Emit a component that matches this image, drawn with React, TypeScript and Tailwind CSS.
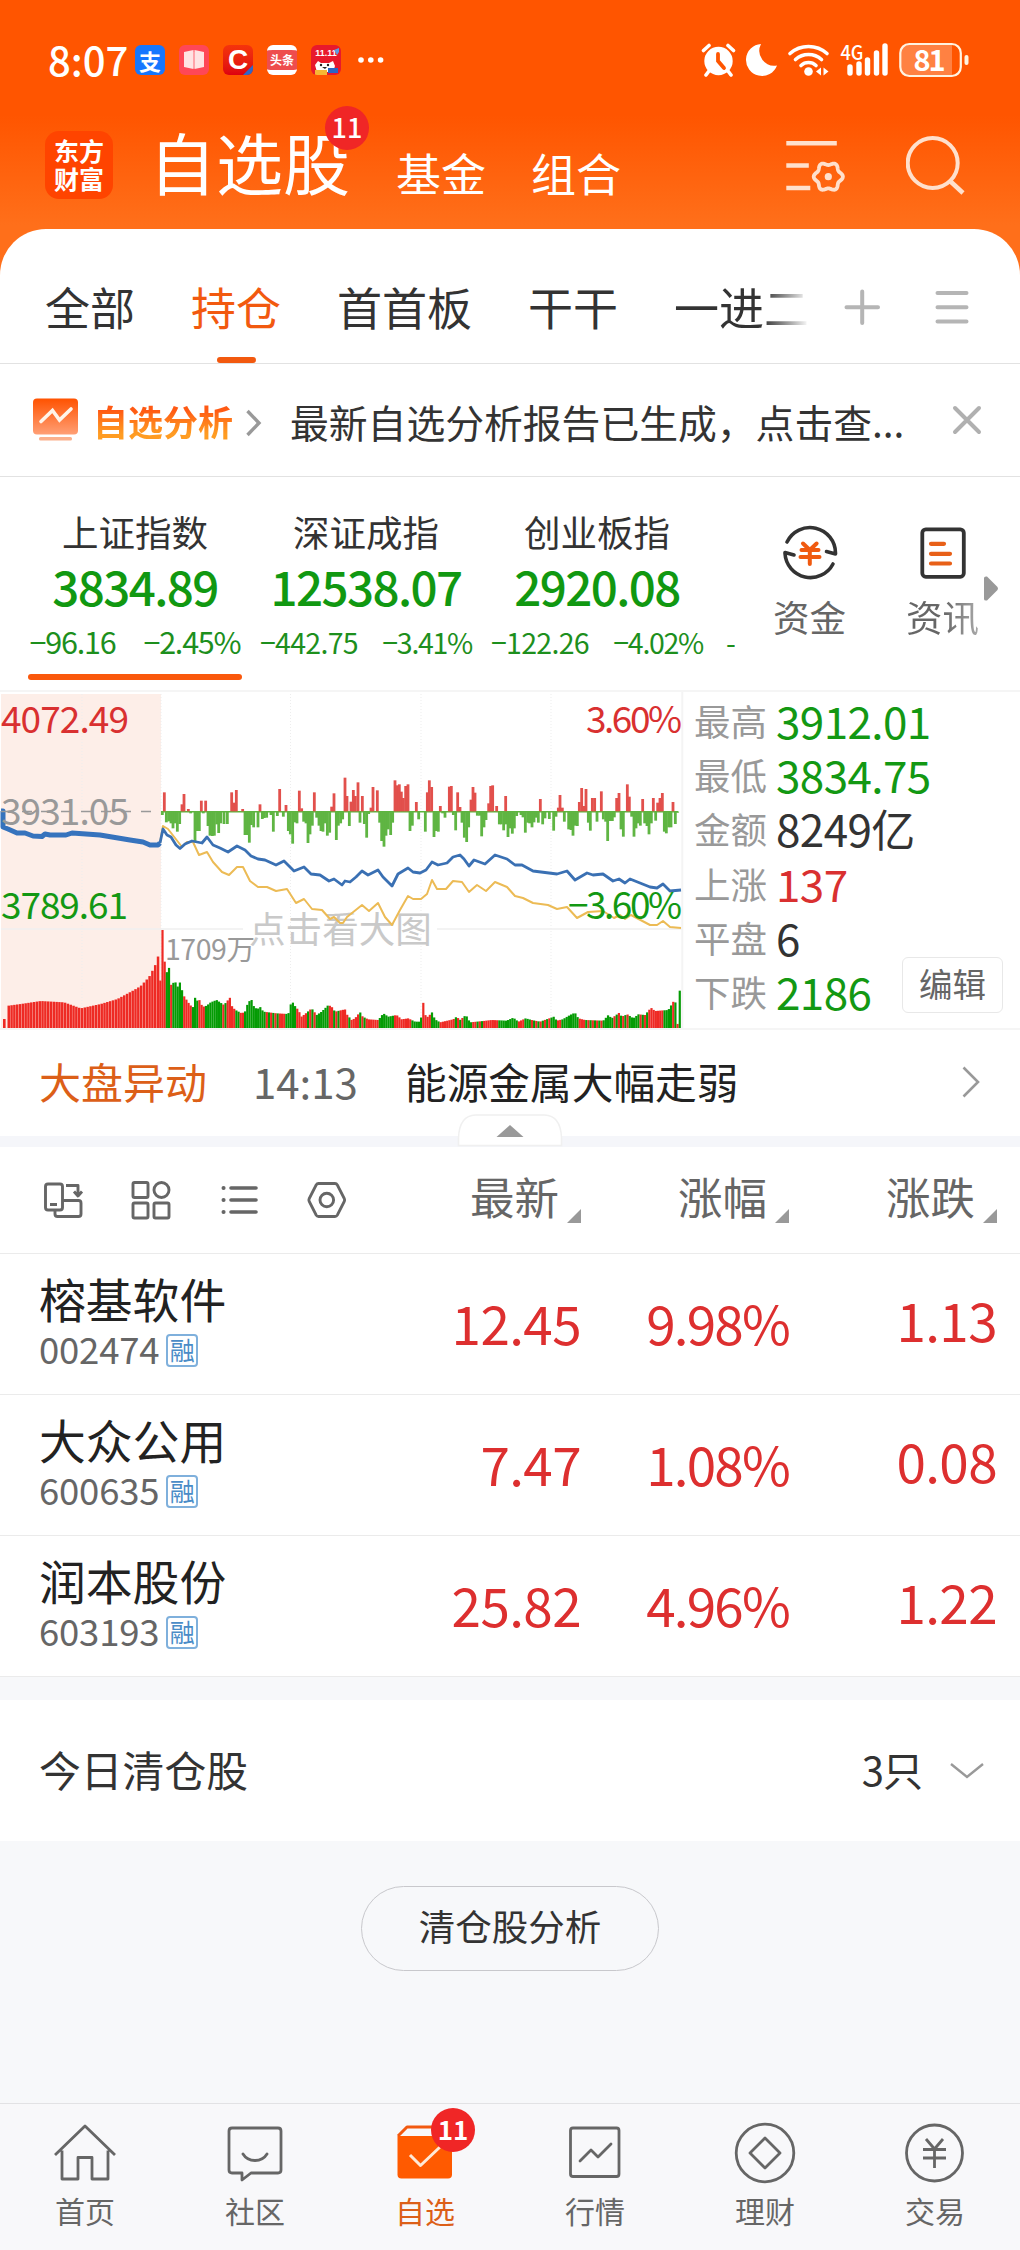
import type { ReactNode } from "react";

type Point = [number, number];

const tabs = ["全部", "持仓", "首首板", "干干", "一进二"];

const indices = [
  { name: "上证指数", value: "3834.89", diff: "−96.16", pct: "−2.45%", active: true },
  { name: "深证成指", value: "12538.07", diff: "−442.75", pct: "−3.41%", active: false },
  { name: "创业板指", value: "2920.08", diff: "−122.26", pct: "−4.02%", active: false },
];

const stats = [
  { label: "最高", value: "3912.01", color: "text-[#139813]" },
  { label: "最低", value: "3834.75", color: "text-[#139813]" },
  { label: "金额", value: "8249亿", color: "text-[#333333]" },
  { label: "上涨", value: "137", color: "text-[#d93030]" },
  { label: "平盘", value: "6", color: "text-[#333333]" },
  { label: "下跌", value: "2186", color: "text-[#139813]" },
];

const stocks = [
  { name: "榕基软件", code: "002474", price: "12.45", pct: "9.98%", change: "1.13" },
  { name: "大众公用", code: "600635", price: "7.47", pct: "1.08%", change: "0.08" },
  { name: "润本股份", code: "603193", price: "25.82", pct: "4.96%", change: "1.22" },
];

// chart data, x / y in thirds of a pixel, y counted from the top of the chart block
const upBars: Point[] = [
  [493, 307], [546, 343], [552, 312], [565, 357], [604, 332], [617, 332], [695, 307], [702, 338], [709, 300],
  [728, 357], [780, 343], [839, 297], [858, 345], [898, 302], [905, 355], [943, 307], [995, 350], [1002, 310],
  [1035, 263], [1041, 318], [1053, 335], [1060, 300], [1066, 318], [1074, 277], [1087, 318], [1113, 353],
  [1119, 291], [1132, 301], [1185, 271], [1191, 286], [1198, 283], [1204, 305], [1210, 324], [1217, 288],
  [1224, 283], [1249, 336], [1282, 307], [1288, 271], [1295, 291], [1321, 348], [1348, 290], [1354, 288],
  [1373, 307], [1380, 351], [1413, 329], [1419, 291], [1425, 308], [1466, 340], [1472, 288], [1478, 286],
  [1490, 348], [1517, 318], [1621, 327], [1675, 353], [1680, 315], [1687, 353], [1738, 336], [1745, 294],
  [1752, 348], [1758, 297], [1777, 324], [1784, 324], [1804, 304], [1850, 324], [1857, 309], [1882, 283],
  [1888, 320], [1928, 327], [1960, 324], [1973, 338], [1980, 324], [1987, 309], [2019, 336],
];

const downBars: Point[] = [
  [487, 375], [499, 397], [506, 394], [513, 400], [519, 415], [526, 400], [532, 425], [539, 402], [572, 370],
  [585, 457], [591, 423], [598, 423], [610, 370], [624, 408], [630, 437], [637, 438], [643, 437], [650, 403],
  [656, 429], [662, 400], [672, 402], [682, 402], [735, 435], [741, 435], [748, 458], [754, 405], [761, 412],
  [774, 412], [787, 387], [793, 384], [800, 383], [813, 375], [820, 425], [832, 378], [850, 380], [865, 423],
  [871, 433], [878, 461], [885, 397], [891, 400], [911, 395], [918, 400], [924, 459], [930, 433], [937, 407],
  [950, 383], [957, 407], [963, 423], [969, 425], [976, 400], [982, 437], [989, 428], [1009, 450], [1015, 407],
  [1022, 400], [1028, 388], [1048, 408], [1080, 398], [1093, 402], [1100, 443], [1106, 372], [1139, 398],
  [1145, 453], [1152, 470], [1158, 437], [1165, 418], [1172, 435], [1178, 398], [1230, 423], [1237, 407],
  [1256, 388], [1276, 425], [1302, 441], [1308, 423], [1315, 425], [1328, 370], [1335, 383], [1360, 375],
  [1367, 421], [1386, 398], [1393, 443], [1400, 456], [1406, 412], [1432, 377], [1439, 377], [1445, 439],
  [1452, 412], [1458, 390], [1498, 403], [1504, 403], [1511, 421], [1517, 403], [1524, 441], [1530, 415],
  [1537, 431], [1543, 415], [1550, 378], [1563, 375], [1569, 382], [1576, 428], [1583, 398], [1589, 400],
  [1596, 412], [1602, 397], [1609, 383], [1615, 398], [1628, 403], [1635, 385], [1648, 387], [1661, 422],
  [1668, 380], [1693, 395], [1706, 418], [1713, 420], [1719, 437], [1726, 407], [1732, 408], [1765, 398],
  [1771, 422], [1791, 395], [1810, 388], [1817, 395], [1823, 453], [1830, 393], [1837, 393], [1843, 382],
  [1863, 418], [1870, 440], [1895, 380], [1902, 440], [1908, 415], [1915, 400], [1921, 407], [1934, 400],
  [1941, 408], [1947, 433], [1954, 400], [1967, 392], [1993, 425], [1999, 430], [2006, 412], [2013, 412],
  [2026, 402], [2033, 368],
];

const auctionCurve: Point[] = [
  [23, 947], [60, 942], [120, 933], [190, 937], [240, 955], [300, 942], [350, 927], [400, 900], [420, 888],
  [445, 861], [460, 833], [468, 815], [475, 787],
];

const volumeCurve: Point[] = [
  [480, 902], [486, 720], [489, 720], [495, 833], [502, 850], [507, 833], [513, 885], [525, 874], [533, 890],
  [540, 877], [550, 915], [560, 930], [570, 945], [580, 952], [585, 923], [592, 932], [600, 930], [605, 945],
  [612, 950], [620, 947], [632, 937], [650, 930], [672, 945], [680, 935], [690, 923], [697, 952], [710, 962],
  [725, 970], [735, 965], [745, 935], [755, 930], [762, 950], [772, 958], [780, 950], [790, 965], [830, 970],
  [865, 972], [875, 932], [885, 948], [895, 960], [905, 980], [920, 968], [935, 955], [950, 975], [965, 965],
  [985, 945], [995, 950], [1005, 965], [1035, 958], [1042, 975], [1055, 990], [1065, 985], [1080, 966],
  [1088, 980], [1105, 988], [1135, 990], [1150, 970], [1165, 980], [1190, 975], [1205, 988], [1225, 985],
  [1245, 995], [1262, 995], [1269, 933], [1276, 975], [1285, 982], [1295, 965], [1305, 988], [1320, 997],
  [1360, 988], [1370, 980], [1380, 990], [1398, 975], [1410, 997], [1450, 993], [1475, 990], [1520, 992],
  [1540, 983], [1555, 995], [1577, 985], [1595, 990], [1620, 995], [1662, 980], [1670, 992], [1688, 988],
  [1710, 975], [1725, 968], [1735, 985], [1755, 990], [1810, 992], [1825, 975], [1835, 985], [1858, 968],
  [1865, 980], [1882, 973], [1900, 985], [1915, 973], [1935, 975], [1953, 953], [1965, 963], [2005, 960],
  [2020, 935], [2028, 938], [2033, 1005], [2037, 1005], [2039, 902],
];

// end of each colour run: r = up, g = down, m = alternating
const volumeRuns: [number, string][] = [
  [495, "r"], [512, "g"], [518, "m"], [550, "g"], [578, "r"], [592, "g"], [616, "r"], [668, "g"], [684, "m"],
  [708, "r"], [722, "g"], [735, "r"], [788, "g"], [835, "m"], [858, "r"], [890, "g"], [918, "r"], [930, "g"],
  [945, "m"], [986, "g"], [1000, "r"], [1024, "m"], [1045, "r"], [1050, "g"], [1075, "r"], [1102, "m"],
  [1135, "r"], [1180, "g"], [1235, "r"], [1265, "g"], [1295, "r"], [1320, "g"], [1360, "r"], [1400, "m"],
  [1418, "g"], [1430, "r"], [1455, "m"], [1495, "r"], [1553, "g"], [1570, "r"], [1595, "g"], [1660, "m"],
  [1670, "g"], [1685, "r"], [1735, "g"], [1750, "r"], [1810, "m"], [1840, "g"], [1885, "m"], [1910, "g"],
  [1945, "m"], [1992, "r"], [2015, "g"], [2023, "r"], [2030, "g"], [2036, "r"], [2050, "g"],
];

const preOpenLine =
  "1,811 3,811 3,827 8,829 17,833 25,833 33,836 42,836.5 45,834 50,835 66,835 72,833 100,835 130,840 143,842 150,845 158,845 160,843";
const indexLine =
  "160,843 163,829 167,835 171,837 176,845 180,848.5 185,844 192,841 202,843 207,837 213,845 220,848 228,852 237,846 245,850 251,856 258,859 265,860 276,865 284,861 294,871 304,867 311,874 320,875 329,881 334,879 342,885 345,881 350,882 356,877 362,871 368,875 378,870 383,877 392,886 398,874 408,868 413,872 420,873 426,870 432,862 438,865 447,863 453,857 460,855 464,859 469,866 474,860 485,864 495,855 507,859 515,865 522,865 533,871 557,874 567,871 575,880 587,873 593,875 603,874 613,881 619,879 625,883 630,879 650,887 657,888 663,884 670,891 681,890";
const leadLine =
  "160,843 163,826 168,829 175,838 182,847 187,842 193,842 199,855 207,852 213,862 222,872 229,875 237,867 243,867 250,881 258,887 267,887 276,891 287,889 296,903 304,899 312,909 322,910 330,919 334,917 340,923 343,923 347,917 362,905 369,911 378,903 385,917 392,925 400,910 408,896 413,899 421,899 427,894 432,880 437,889 446,889 453,881 462,882 469,892 477,885 486,891 495,882 507,887 515,896 523,898 533,903 548,905 557,909 567,907 577,918 588,912 603,911 614,918 620,915 625,919 631,915 650,925 657,925 663,921 670,927 681,928";

// six-lobed outline of the settings icon
const gearPoints = Array.from({ length: 72 }, (_, i) => {
  const a = (i * Math.PI) / 36;
  const r = 13.1 + 1.5 * Math.cos(6 * a);
  return `${(828.3 + r * Math.cos(a)).toFixed(2)},${(176.7 + r * Math.sin(a)).toFixed(2)}`;
}).join(" ");

function valueAt(curve: Point[], x: number) {
  for (let i = 1; i < curve.length; i++) {
    const [x0, y0] = curve[i - 1];
    const [x1, y1] = curve[i];
    if (x <= x1) return y0 + ((y1 - y0) * Math.max(0, x - x0)) / (x1 - x0);
  }
  return curve[curve.length - 1][1];
}

const RED = "#ee2a24";
const GREEN = "#049b04";

function volumeColor(x: number, i: number) {
  const run = volumeRuns.find(([end]) => x <= end);
  const kind = run ? run[1] : "g";
  if (kind === "m") return i % 2 ? RED : GREEN;
  return kind === "r" ? RED : GREEN;
}

function MinuteChart() {
  const auction = Array.from({ length: 54 }, (_, i) => 24 + i * 8.45);
  const minutes = Array.from({ length: 240 }, (_, i) => 481 + i * 6.52);
  return (
    <svg
      width="684"
      height="336"
      viewBox="0 692 684 336"
      className="block shrink-0"
      fontFamily="'Noto Sans CJK SC', sans-serif"
    >
      <rect x="1" y="694" width="160" height="334" fill="#fdeee8" />
      {[82, 161, 290.5, 421, 551].map((x) => (
        <line key={x} x1={x} x2={x} y1="694" y2="1028" stroke="#ededed" strokeDasharray="1 2" />
      ))}
      <path d="M1 929H243M437 929H682" stroke="#f0f0f0" strokeWidth="1.6" />
      <path d="M682.3 692V1028" stroke="#f4f4f4" strokeWidth="2" />

      {auction.map((x) => {
        const y = 690 + valueAt(auctionCurve, x) / 3;
        return <rect key={x} x={x / 3 - 0.5} y={y} width="2.5" height={1028 - y} fill={RED} />;
      })}
      <rect x="3" y="1019" width="2.6" height="9" fill={RED} />
      {minutes.map((x, i) => {
        const y = 690 + valueAt(volumeCurve, x) / 3;
        return <rect key={x} x={x / 3 - 1.1} y={y} width="2.2" height={1028 - y} fill={volumeColor(x, i)} />;
      })}

      <path d="M161 811.7H678" stroke="#5cb53c" strokeWidth="1.4" />
      {upBars.map(([x, y], i) => (
        <rect key={i} x={x / 3 - 1.4} y={690 + y / 3} width="2.8" height={(364 - y) / 3} fill="#e2504c" />
      ))}
      {downBars.map(([x, y], i) => (
        <rect key={i} x={x / 3 - 1.4} y="811.5" width="2.8" height={(y - 364.5) / 3} fill="#5fb543" />
      ))}

      <text x="249" y="943" fontSize="36.6" fill="#c9c9c9">点击看大图</text>
      <polyline points={leadLine} fill="none" stroke="#ecbb55" strokeWidth="2" strokeLinejoin="round" />
      <polyline points={indexLine} fill="none" stroke="#3a70b3" strokeWidth="2.8" strokeLinejoin="round" />
      <polyline points={preOpenLine} fill="none" stroke="#3673bd" strokeWidth="5" strokeLinejoin="round" />
      <path d="M1 811.5H8M22 811.5H32M41 811.5H51M61 811.5H71M81 811.5H91M101 811.5H111M121 811.5H131M141 811.5H151" stroke="#999999" strokeWidth="1.4" />

      <text x="1" y="733" fontSize="37" textLength="128" fill="#d93030">4072.49</text>
      <text x="1" y="825" fontSize="37" textLength="128" fill="#999999">3931.05</text>
      <text x="1" y="919" fontSize="37" textLength="127" fill="#139813">3789.61</text>
      <text x="682" y="733" fontSize="37" textLength="96" textAnchor="end" fill="#d93030">3.60%</text>
      <text x="682" y="919" fontSize="37" textLength="114" textAnchor="end" fill="#139813">−3.60%</text>
      <text x="165" y="960" fontSize="28.5" textLength="90" fill="#999999">1709万</text>
    </svg>
  );
}

function StatusBar() {
  return (
    <div className="flex h-[120px] items-center pl-[48px] pr-[51px] text-white">
      <span className="w-[87px] pb-[3px] text-[40px] font-medium leading-[40px]">8:07</span>
      <div className="flex gap-[14px]">
        <span className="flex size-[30px] items-center justify-center rounded-[6px] bg-[#1677ff] text-[22px] font-bold leading-none">支</span>
        <svg width="30" height="30" viewBox="0 0 30 30">
          <rect width="30" height="30" rx="6" fill="#ff4757" />
          <path d="M5 7l9.500-2v19L5 22zM25 7l-9.500-2v19l9.500-2z" fill="#ffe3e3" />
          <path d="M15 7v16" stroke="#ffb3b8" />
        </svg>
        <span className="relative flex size-[30px] items-center justify-center overflow-hidden rounded-[6px] bg-gradient-to-b from-[#f5330c] to-[#de0010] font-['Liberation_Sans',sans-serif] text-[28px] font-bold leading-none">
          C
          <svg width="10" height="10" className="absolute bottom-0 right-0">
            <path d="M10 0V10H0Z" fill="#2f67c9" />
          </svg>
        </span>
        <span className="flex size-[30px] items-center justify-center overflow-hidden whitespace-nowrap rounded-[6px] border-y-[5px] border-white bg-[#ee4d4d] text-[12px] font-bold leading-none">头条</span>
        <span className="relative flex size-[30px] justify-center overflow-hidden rounded-[6px] bg-[#e8192c] pt-[4px] font-['Liberation_Sans',sans-serif] text-[9px] font-bold leading-none">
          11.11
          <svg width="30" height="30" viewBox="0 0 30 30" className="absolute inset-0">
            <path d="M23 5l5-2v4l-2 3z" fill="#5f9be0" />
            <path d="M4 20l3-4 3 2h8l4-2 2 5-2 6H6z" fill="#ffffff" />
            <circle cx="10" cy="20" r="1.200" fill="#222222" />
            <circle cx="17" cy="20" r="1.200" fill="#222222" />
            <path d="M11 22h5l-2 2z" fill="#222222" />
            <path d="M4 25h12v5H4z" fill="#f7b733" />
            <path d="M17 23h10v5H17z" fill="#2b66c4" />
          </svg>
        </span>
      </div>
      <svg width="26" height="6" className="ml-[17px]" fill="#ffffff">
        <circle cx="3" cy="3" r="2.800" />
        <circle cx="12.800" cy="3" r="2.800" />
        <circle cx="22.600" cy="3" r="2.800" />
      </svg>
      <svg width="268" height="36" viewBox="0 0 268 36" className="ml-auto" fill="none">
        <circle cx="17.500" cy="19" r="14.200" fill="#ffffff" />
        <path d="M2.500 8.500L8 3.500M32.500 8.500L27 3.500M5 33l3-4M30 33l-3-4" stroke="#ffffff" strokeWidth="3.600" strokeLinecap="round" />
        <path d="M17 12v7l6 7" stroke="#ff5500" strokeWidth="3.800" strokeLinecap="round" />
        <path d="M60 2a16 16 0 1 0 16 21.500A15 15 0 0 1 60 2z" fill="#ffffff" />
        <path d="M89 11.500a28 28 0 0 1 37 0M94.500 17.500a19.500 19.500 0 0 1 26 0M100 23.500a11 11 0 0 1 15 0" stroke="#ffffff" strokeWidth="3.600" strokeLinecap="round" />
        <circle cx="107.500" cy="29.500" r="4.300" fill="#ffffff" />
        <path d="M120 25.500v8l-5-4zM122.500 25.500v8l5-4z" fill="#ffffff" />
        <text x="139.500" y="17.500" fontSize="20" fontWeight="500" textLength="23" lengthAdjust="spacingAndGlyphs" fill="#ffffff" fontFamily="'Noto Sans CJK SC', sans-serif">4G</text>
        <path d="M149 25v6M158 22v9M166.500 18v13M175.500 11v20M184 4v27" stroke="#ffffff" strokeWidth="5.400" strokeLinecap="round" />
        <path d="M208.500 2.500H251V34H208.500q-8.500 0-8.500-9V11q0-8.500 8.500-8.500z" fill="#ff8142" />
        <rect x="199.300" y="2" width="60.500" height="32" rx="9" stroke="#fff3e0" strokeWidth="2.200" />
        <rect x="263.500" y="13" width="4" height="10" rx="2" fill="#fff3e0" />
        <text x="212.500" y="28.500" fontSize="29" fontWeight="700" textLength="32" fill="#ffffff" fontFamily="'Noto Sans CJK SC', sans-serif">81</text>
      </svg>
    </div>
  );
}

function TitleBar() {
  return (
    <div className="flex h-[109px] items-start pl-[45px] text-white">
      <div className="mt-[11px] flex size-[68px] flex-col items-center justify-center rounded-[14px] bg-[#ff4400] pb-[3px] text-[25px] font-bold leading-[28px]">
        <span>东方</span>
        <span>财富</span>
      </div>
      <div className="relative ml-[36px] w-[247px] whitespace-nowrap pt-px text-[67px] leading-[80px]">
        自选股
        <span className="absolute left-[176px] top-[-14px] flex size-[44px] items-center justify-center rounded-full bg-[#f02626] pb-[3px] text-[27px] font-medium leading-none">
          11
        </span>
      </div>
      <span className="mt-[27px] w-[135px] text-[45px] leading-[52px]">基金</span>
      <span className="mt-[27px] text-[45px] leading-[52px]">组合</span>
      <svg width="62" height="60" viewBox="784 137 62 60" className="ml-[163px] mt-[17px]" fill="none" stroke="#ffe0cc" strokeWidth="4.400">
        <path d="M786.300 143.300h50.500M786.300 165.500h22.500M786.300 188h24" />
        <polygon points={gearPoints} strokeWidth="3.800" strokeLinejoin="round" />
        <circle cx="828.300" cy="176.700" r="3.600" fill="#ffe0cc" stroke="none" />
      </svg>
      <svg width="60" height="60" viewBox="906 136 60 60" className="ml-[60px] mt-[16px]" fill="none" stroke="#ffe0cc" strokeWidth="4">
        <circle cx="932.700" cy="163" r="25" />
        <path d="M949.500 180.500L963 193" strokeWidth="4.600" />
      </svg>
    </div>
  );
}

function TabRow() {
  return (
    <div className="relative flex h-[135px] items-center border-b border-[#e2e2e2] pl-[45px] pt-[21px]">
      <div className="flex w-[764px] gap-[56px] overflow-hidden whitespace-nowrap text-[45px] leading-[60px] text-[#333333]">
        {tabs.map((tab) => (
          <span key={tab} className={tab === "持仓" ? "text-[#f2590f]" : tab === "一进二" ? "bg-gradient-to-r from-[#333333] from-65% to-white bg-clip-text text-transparent" : ""}>
            {tab}
          </span>
        ))}
      </div>
      <svg width="126" height="38" viewBox="844 288 126 38" className="ml-[35px]" stroke="#b5b5b5" strokeWidth="4" strokeLinecap="round">
        <path d="M846.500 307.300h31.500M862.200 291.500v31.500M937.500 293h29M937.500 307.300h29M937.500 321.500h29" />
      </svg>
      <span className="absolute bottom-0 left-[217px] h-[6px] w-[39px] rounded-full bg-[#f2590f]" />
    </div>
  );
}

function AnalysisBanner() {
  return (
    <div className="flex h-[113px] items-center border-b border-[#e2e2e2] pl-[33px]">
      <svg width="46" height="44" viewBox="33 401 46 44">
        <defs>
          <linearGradient id="badge" x1="0" x2="0" y1="0" y2="1">
            <stop offset="0" stopColor="#ff5200" />
            <stop offset="1" stopColor="#ff9f75" />
          </linearGradient>
        </defs>
        <rect x="33" y="401.500" width="45" height="36" rx="4" fill="url(#badge)" />
        <rect x="39" y="440" width="33" height="3.600" rx="1.500" fill="#fbb08c" />
        <path d="M41 424.500l11.500-11 7 9.500 11.500-11" fill="none" stroke="#fff5ea" strokeWidth="3.600" strokeLinecap="round" />
      </svg>
      <span className="ml-[14px] mt-[2px] bg-gradient-to-b from-[#ff5a14] from-30% to-[#ff9c22] to-75% bg-clip-text text-[35px] font-bold leading-[52px] text-transparent">
        自选分析
      </span>
      <svg width="18" height="30" viewBox="245 410 18 30" className="ml-[12px] mt-[6px]" fill="none" stroke="#999999" strokeWidth="3.400">
        <path d="M247.500 413l11.500 12-11.500 12" />
      </svg>
      <span className="ml-[27px] mt-[2px] w-[650px] whitespace-nowrap text-[38.800px] leading-[56px] text-[#333333]">
        最新自选分析报告已生成，点击查...
      </span>
      <svg width="30" height="30" viewBox="952 406 30 30" className="ml-[12px]" stroke="#b0b0b0" strokeWidth="4" strokeLinecap="round">
        <path d="M955 409l24 24M979 409l-24 24" />
      </svg>
    </div>
  );
}

function IndexStrip() {
  return (
    <div className="relative flex h-[215px] border-b-2 border-[#f5f5f5]">
      <div className="flex w-[735px] shrink-0 gap-[17px] overflow-hidden whitespace-nowrap pl-[28px] pt-[27px]">
        {indices.map((item) => (
          <div key={item.name} className="flex w-[214px] shrink-0 flex-col items-center">
            <span className="text-[36.5px] leading-[56px] text-[#333333]">{item.name}</span>
            <span className="text-[47.5px] font-medium leading-[52px] tracking-[-1.600px] text-[#119811]">{item.value}</span>
            <div
              className={
                item.active
                  ? "mt-[4px] flex h-[52px] w-[211px] items-center justify-between text-[30.500px] tracking-[-1.200px] text-[#1d8f1d]"
                  : "mt-[4px] flex h-[52px] w-[212px] items-center justify-between text-[28.500px] tracking-[-0.700px] text-[#1d8f1d]"
              }
            >
              <span>{item.diff}</span>
              <span className={item.active ? "" : "tracking-[-1.300px]"}>{item.pct}</span>
            </div>
            {item.active && <span className="mt-[6px] h-[6px] w-full rounded-full bg-[#fa580c]" />}
          </div>
        ))}
        <span className="ml-[5px] mt-[112px] text-[28.500px] leading-[52px] text-[#1d8f1d]">-</span>
      </div>
      <div className="flex flex-col items-center pl-[38px] pt-[46px]">
        <svg width="60" height="60" viewBox="779 523 60 60" fill="none" stroke="#333333" strokeWidth="3.600" strokeLinecap="round" strokeLinejoin="round">
          <path d="M786 542a25.500 25.500 0 0 1 48.500 11v1l-9-2.500" />
          <path d="M832 564a25.500 25.500 0 0 1-48-10.500v-1l9 2.500" />
          <path d="M802 543.500l6.800 6.500 6.800-6.500M800.500 550h17M799.500 557h19M808.800 550v14" stroke="#f05a10" strokeWidth="4" />
        </svg>
        <span className="mt-[6px] text-[36.5px] leading-[56px] text-[#666666]">资金</span>
      </div>
      <div className="ml-[60px] flex flex-col items-center pt-[46px]">
        <svg width="60" height="60" viewBox="912 523 60 60" fill="none" strokeLinecap="round">
          <rect x="921.300" y="529.300" width="41.500" height="47.500" rx="3.500" stroke="#333333" strokeWidth="3.800" />
          <path d="M930 543.800h13M930 553.800h19M930 563.500h19" stroke="#e86018" strokeWidth="4.200" />
        </svg>
        <span className="mt-[6px] bg-gradient-to-r from-[#666666] from-50% to-[#aaaaaa] bg-clip-text text-[36.5px] leading-[56px] text-transparent">资讯</span>
      </div>
      <svg width="16" height="26" viewBox="983 577 16 26" className="ml-[4px] mt-[99px]">
        <path d="M984 579q0-2 3-1.500l10.500 10.500q1 1.500 0 3L987 601.500q-3 .5-3-1.500z" fill="#999999" />
      </svg>
    </div>
  );
}

function MarketPanel() {
  return (
    <div className="relative flex h-[338px] border-b-2 border-[#f5f5f5]">
      <MinuteChart />
      <div className="flex flex-col pl-[10px] pt-[2px]">
        {stats.map((s) => (
          <div key={s.label} className="flex h-[54.200px] items-center whitespace-nowrap">
            <span className="w-[82px] text-[36.5px] leading-[54px] text-[#999999]">{s.label}</span>
            <span className={`pb-[2px] text-[44px] leading-[50px] tracking-[-0.6px] ${s.color}`}>{s.value}</span>
          </div>
        ))}
      </div>
      <button className="absolute bottom-[15px] right-[17px] h-[56px] w-[101px] rounded-[6px] border border-[#e8e8e8] bg-white pb-[4px] text-[33.5px] leading-none text-[#666666]">
        编辑
      </button>
    </div>
  );
}

function NewsRow() {
  return (
    <div className="relative flex h-[117px] items-start border-b-[11px] border-[#f5f6fa] pl-[39px] pt-[21px] text-[42px] leading-[60px]">
      <span className="w-[214px] text-[#dc5f18]">大盘异动</span>
      <span className="w-[152px] text-[#666666]">14:13</span>
      <span className="text-[41.700px] text-[#222222]">能源金属大幅走弱</span>
      <svg width="20" height="34" viewBox="961 1065 20 34" className="ml-auto mr-[39px] mt-[14px]" fill="none" stroke="#999999" strokeWidth="2.600">
        <path d="M963.500 1067.500l14.500 14.500-14.500 14.500" />
      </svg>
      <svg width="106" height="34" viewBox="457 1113 106 34" className="absolute left-[457px] top-[83px]">
        <path d="M458.500 1145.500v-8q1-22 17-22.500h69q16 .5 17 22.500v8z" fill="#ffffff" stroke="#f0f0f0" strokeWidth="1.500" />
        <path d="M496.500 1137l13.500-12 13.500 12z" fill="#999999" />
      </svg>
    </div>
  );
}

function ColumnTitle({ children }: { children: ReactNode }) {
  return (
    <span className="flex w-[208px] justify-end text-[44.500px] leading-[60px] text-[#666666]">
      {children}
      <svg width="14" height="14" className="ml-[8px] mt-[43px]">
        <path d="M14 0V14H0Z" fill="#999999" />
      </svg>
    </span>
  );
}

function ListHeader() {
  return (
    <div className="flex h-[107px] items-center border-b border-[#ebebeb] pl-[42px] pr-[23px]">
      <svg width="308" height="42" viewBox="42 1179 308 42" fill="none" stroke="#666666" strokeWidth="2.900" strokeLinejoin="round">
        <rect x="45.500" y="1184" width="17" height="26" rx="2.500" />
        <path d="M50 1204.500h7M66 1185.500h12v9M74 1191.500l4 4.500 4-4.500M62.500 1200.500h16q2.500 0 2.500 2.500v11q0 2.500-2.500 2.500h-21q-2.500 0-2.500-2.500v-4" />
        <rect x="133" y="1182.500" width="15" height="15" rx="1.500" />
        <circle cx="161.500" cy="1190" r="7.500" />
        <rect x="133" y="1203" width="15" height="15" rx="1.500" />
        <rect x="154" y="1203" width="15" height="15" rx="1.500" />
        <path d="M231 1188h25M231 1200h25M231 1212h25" strokeWidth="3.600" strokeLinecap="round" />
        <path d="M223.500 1188h.1M223.500 1200h.1M223.500 1212h.1" strokeWidth="4" strokeLinecap="round" />
        <path d="M318.500 1183.500h16.500q1.500 0 2.300 1.400l7 13.700q.7 1.400 0 2.800l-7 13.700q-.8 1.400-2.300 1.400h-16.500q-1.500 0-2.300-1.400l-7-13.700q-.7-1.400 0-2.800l7-13.700q.8-1.400 2.300-1.400z" />
        <circle cx="326.800" cy="1200" r="6.800" />
      </svg>
      <div className="-mt-[8px] ml-auto flex">
        <ColumnTitle>最新</ColumnTitle>
        <ColumnTitle>涨幅</ColumnTitle>
        <ColumnTitle>涨跌</ColumnTitle>
      </div>
    </div>
  );
}

function StockRow({ stock }: { stock: (typeof stocks)[number] }) {
  return (
    <div className="flex h-[141px] border-b border-[#ebebeb] pl-[39px] pr-[23px]">
      <div className="flex w-[334px] flex-col pt-[14px]">
        <span className="text-[46.800px] leading-[60px] text-[#222222]">{stock.name}</span>
        <span className="-mt-px flex items-center text-[36.5px] leading-[44px] tracking-[-0.2px] text-[#666666]">
          {stock.code}
          <i className="ml-[7px] mt-[3px] flex h-[33px] w-[32px] items-center justify-center rounded-[4px] border-2 border-[#7fb0dc] pb-[2px] text-[25px] not-italic leading-none tracking-normal text-[#4a8cc7]">
            融
          </i>
        </span>
      </div>
      <div className="flex text-right text-[53px] leading-[60px] tracking-[-0.6px] text-[#dd2f2f]">
        <span className="w-[208px] pt-[38px]">{stock.price}</span>
        <span className="w-[208px] pt-[38px] tracking-[-1.800px]">{stock.pct}</span>
        <span className="w-[208px] pt-[35px]">{stock.change}</span>
      </div>
    </div>
  );
}

function NavItem({ label, active, children }: { label: string; active?: boolean; children: ReactNode }) {
  return (
    <div className="flex w-[170px] flex-col items-center pt-[14px]">
      <svg width="70" height="70" viewBox="0 0 70 70" fill="none" stroke="#666666" strokeWidth="2.800" strokeLinejoin="round">
        {children}
      </svg>
      <span className={active ? "text-[30px] leading-[44px] text-[#dc5f18]" : "text-[30px] leading-[44px] text-[#666666]"}>{label}</span>
    </div>
  );
}

// icons are drawn round (35, 35)
function BottomNav() {
  return (
    <nav className="relative mt-auto flex h-[147px] border-t border-[#e2e2e4] bg-[#f8f8fa]">
      <NavItem label="首页">
        <path d="M5 37L35 8l30 29M12 32.500V61h16V39.500h14V61h16V32.500" />
      </NavItem>
      <NavItem label="社区">
        <path d="M12 10h46q3 0 3 3v39q0 3-3 3H31l-9 7v-7H12q-3 0-3-3V13q0-3 3-3z" />
        <path d="M23 36q4 6.500 12 6.500T47 36" strokeLinecap="round" />
      </NavItem>
      <NavItem label="自选" active>
        <path d="M8 18L17 9h38l6 8" stroke="#f2590f" strokeWidth="3" />
        <path d="M7.500 18H62v38.500q0 4-4 4H11.500q-4 0-4-4z" fill="#ff5a00" stroke="none" />
        <path d="M20 37l10.500 10.500L50 29" stroke="#ffe9d6" strokeWidth="3" />
      </NavItem>
      <NavItem label="行情">
        <rect x="10.500" y="10" width="48.500" height="48.500" rx="2.500" />
        <path d="M20 43l11-11 7 7 13-13" strokeLinecap="round" />
      </NavItem>
      <NavItem label="理财">
        <circle cx="35" cy="35" r="28.800" />
        <path d="M35 20L50 35 35 50 20 35z" />
      </NavItem>
      <NavItem label="交易">
        <circle cx="34.500" cy="35" r="28" />
        <path d="M26 21l8.500 10L43 21M23 31.500h23M23 40h23M34.500 31v19" />
      </NavItem>
      <span className="absolute left-[431px] top-[4px] flex size-[44px] items-center justify-center rounded-full bg-[#f02626] pb-[3px] text-[26px] font-bold leading-none text-white">
        11
      </span>
    </nav>
  );
}

export default function App() {
  return (
    <div className="flex h-[2250px] w-[1020px] flex-col overflow-hidden bg-[#f7f8fa] font-['Noto_Sans_CJK_SC',sans-serif]">
      <div className="bg-[linear-gradient(to_bottom,#ff5500_0px,#ff5500_115px,#ff6f1a_225px,#ff6f1a_100%)]">
        <StatusBar />
        <TitleBar />
        <div className="rounded-t-[46px] bg-white">
          <TabRow />
        </div>
      </div>
      <div className="bg-white">
        <AnalysisBanner />
        <IndexStrip />
        <MarketPanel />
        <NewsRow />
        <ListHeader />
        {stocks.map((stock) => (
          <StockRow key={stock.code} stock={stock} />
        ))}
      </div>
      <div className="mt-[23px] flex h-[141px] items-center bg-white pl-[39px] pr-[35px] text-[41.800px] leading-[60px] text-[#333333]">
        <span className="pb-[3px]">今日清仓股</span>
        <span className="ml-auto pb-[3px] text-[40px] tracking-[-1px]">3只</span>
        <svg width="36" height="18" viewBox="0 0 36 18" className="ml-[27px]" fill="none" stroke="#999999" strokeWidth="2.400">
          <path d="M2 2l16 13L34 2" />
        </svg>
      </div>
      <button className="mx-auto mt-[45px] h-[85px] w-[298px] shrink-0 rounded-full border border-[#c8c8cc] pb-[4px] text-[36.5px] leading-none text-[#333333]">
        清仓股分析
      </button>
      <BottomNav />
    </div>
  );
}
